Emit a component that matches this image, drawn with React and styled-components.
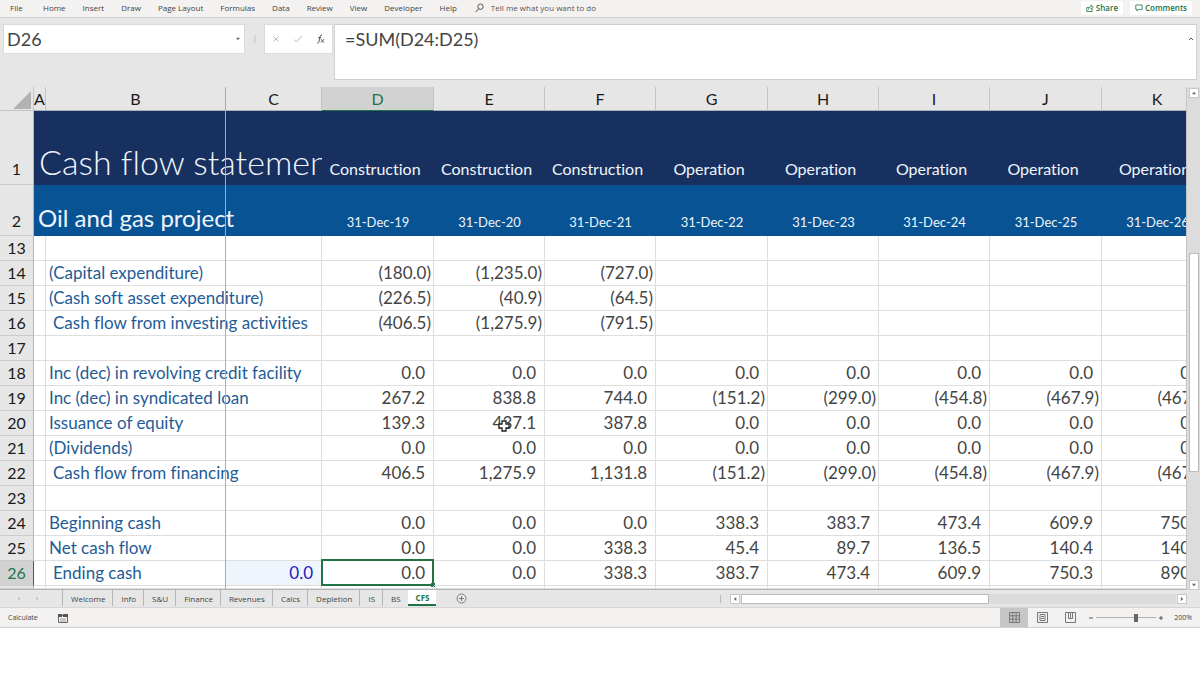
import React from "react";
import styled, { createGlobalStyle } from "styled-components";

const GlobalStyle = createGlobalStyle`
  *, *::before, *::after { box-sizing: border-box; }
  body { margin: 0; background: #fff; font-family: Lato, Roboto, sans-serif; font-variant-ligatures: none; color: #444; }
  button, input, textarea { font: inherit; font-variant-ligatures: none; color: inherit; border: 0; margin: 0; padding: 0; background: none; border-radius: 0; outline: none; }
`;

const UI_FONT = `"Open Sans", "Noto Sans", sans-serif`;

const Window = styled.div`
  display: flex;
  flex-direction: column;
  background: #e6e6e6;
`;

const Ribbon = styled.nav`
  display: flex;
  align-items: center;
  height: 18px;
  padding: 0 8px 2px 10px;
  background: #f3f2f1;
  border-bottom: 1px solid #d2d2d2;
  font-family: ${UI_FONT};
  font-size: 8px;
  line-height: 14px;
`;

const MenuList = styled.div`
  display: flex;
  gap: 17px;
`;

const MenuButton = styled.button`
  min-width: 16px;
  text-align: left;
  white-space: nowrap;
`;

const TellMe = styled.label`
  display: flex;
  flex: 1;
  align-items: center;
  gap: 7px;
  margin-left: 18px;
  input { flex: 1; height: 14px; }
  input::placeholder { color: #555; opacity: 1; }
`;

const RibbonAction = styled.button`
  display: flex;
  align-items: center;
  justify-content: center;
  gap: 2px;
  height: 14px;
  margin-left: 7px;
  padding: 0 5px !important;
  background: #fff !important;
  color: #217346 !important;
  font-weight: 600 !important;
  line-height: 14px;
`;

const FormulaBar = styled.div`
  display: flex;
  align-items: flex-start;
  padding: 6px 3px 7px;
  color: #444;
`;

const NameBox = styled.div`
  display: flex;
  align-items: center;
  width: 242px;
  height: 30px;
  padding: 0 3px;
  background: #fff;
  border: 1px solid #dadada;
  input { flex: 1; min-width: 0; font-size: 18px; line-height: 28px; }
  button { display: flex; }
`;

const Grip = styled.div`
  width: 19px;
  height: 30px;
  display: flex;
  align-items: center;
  justify-content: center;
`;

const EntryButtons = styled.div`
  display: flex;
  align-items: center;
  justify-content: space-between;
  width: 69px;
  height: 30px;
  padding: 0 7px;
  background: #fff;
  border: 1px solid #dadada;
  button { display: flex; }
`;

const FormulaField = styled.div`
  display: flex;
  flex: 1;
  height: 56px;
  margin-left: 1px;
  background: #fff;
  border: 1px solid #d0d0d0;
  textarea {
    flex: 1;
    height: 54px;
    padding: 0 10px;
    resize: none;
    font-size: 18px;
    line-height: 28px;
  }
  button { display: flex; height: 8px; margin: 10px 2px; }
`;

const Workspace = styled.div`
  display: flex;
`;

const Viewport = styled.div`
  position: relative;
  flex: 1;
  min-width: 0;
  overflow: hidden;
  border-bottom: 1px solid #b4b4b4;
`;

const Sheet = styled.table`
  table-layout: fixed;
  width: 1213px;
  border-collapse: separate;
  border-spacing: 0;
  font-size: 16px;
  line-height: 24px;
  background: #fff;
  td, th { padding: 0; font-weight: 400; white-space: nowrap; }
`;

const ColumnHead = styled.th`
  height: 24px;
  color: ${(p) => (p.$active ? "#217346" : "#1a1a1a")};
  background: ${(p) => (p.$active ? "#d2d2d2" : "#e6e6e6")};
  border-right: 1px solid #c4c4c4;
  border-bottom: 1px solid ${(p) => (p.$active ? "#217346" : "#a8b0bc")};
  line-height: 23px;
`;

const Corner = styled.td`
  height: 24px;
  background: #e6e6e6;
  border-right: 1px solid #c4c4c4;
  border-bottom: 1px solid #c4c4c4;
  svg { display: block; margin: 2px 0 0 13px; }
`;

const RowHead = styled.th`
  height: ${(p) => p.$height || 25}px;
  color: ${(p) => (p.$active ? "#217346" : "#1a1a1a")};
  background: ${(p) => (p.$active ? "#d2d2d2" : "#e6e6e6")};
  border-right: 1px solid ${(p) => (p.$active ? "#217346" : "#b4b4b4")};
  border-bottom: 1px solid #cccccc;
`;

const BandRow = styled.tr`
  background: ${(p) => p.$color};
  color: #f0f5fb;
  th, td { vertical-align: baseline; }
`;

const BandTitle = styled.td`
  overflow: hidden;
  padding: ${(p) => p.$pad} !important;
  font-size: ${(p) => p.$size}px;
  line-height: ${(p) => p.$line}px;
  font-weight: ${(p) => p.$weight} !important;
`;

const Phase = styled.td`
  padding-right: 6px !important;
  text-align: center;
`;

const DateCell = styled.td`
  text-align: center;
  font-size: 13px;
`;

const Cell = styled.td`
  position: relative;
  height: ${(p) => p.$height || 25}px;
  border-right: 1px solid #dedede;
  border-bottom: 1px solid #dedede;
`;

const LabelCell = styled(Cell)`
  padding-left: ${(p) => (p.$indent ? 7 : 3)}px !important;
  color: #1f5c96;
  font-size: 17px;
`;

const NumberCell = styled(Cell)`
  padding-right: ${(p) => (p.$negative ? 2 : 8)}px !important;
  text-align: right;
  color: #444;
  font-size: 17px;
`;

const InputCell = styled(NumberCell)`
  background: #eff5fd;
  color: #1b1bc0;
`;

const Selection = styled.span`
  position: absolute;
  inset: -2px -1px -1px -1px;
  border: 2px solid #217346;
  &::after {
    content: "";
    position: absolute;
    right: -3px;
    bottom: -3px;
    width: 4px;
    height: 4px;
    background: #217346;
  }
`;

const FreezeLine = styled.div`
  position: absolute;
  top: 0;
  bottom: 0;
  left: 225px;
  width: 1px;
  background: #a4acb6;
`;

const Pointer = styled.svg`
  position: absolute;
  top: 8px;
  left: 63px;
`;

const VScroll = styled.div`
  display: flex;
  flex-direction: column;
  width: 14px;
  padding: 1px 2px 0;
  background: #dcdcdc;
  border-left: 1px solid #c4c4c4;
`;

const ScrollButton = styled.button`
  display: flex;
  align-items: center;
  justify-content: center;
  width: 10px;
  height: 10px;
  background: #fff !important;
  border: 1px solid #c8c8c8 !important;
`;

const VThumb = styled.div`
  height: 219px;
  margin: 155px 0 auto;
  width: 10px;
  background: #fff;
  border: 1px solid #bcbcbc;
`;

const SheetBar = styled.div`
  display: flex;
  align-items: stretch;
  height: 18px;
  padding-right: 13px;
  border-bottom: 1px solid #d6d6d6;
  font-family: ${UI_FONT};
  font-size: 8px;
  line-height: 15px;
`;

const TabArrows = styled.div`
  display: flex;
  align-items: center;
  gap: 14px;
  width: 62px;
  padding-left: 16px;
  button { display: flex; }
`;

const Tabs = styled.div`
  display: flex;
  align-items: flex-start;
`;

const Tab = styled.button`
  height: 16px;
  padding: 0 7px 0 8px !important;
  white-space: nowrap;
  ${(p) =>
    p.$active
      ? `background: #fff !important; color: #217346 !important; font-weight: 700 !important; border-bottom: 2px solid #217346 !important;`
      : `border-left: 1px solid #b4b4b4 !important;`}
`;

const AddSheet = styled.button`
  display: flex;
  align-items: center;
  margin-left: 20px !important;
`;

const HScroll = styled.div`
  display: flex;
  align-items: center;
  width: 40%;
  margin-left: auto;
  padding-left: 8px;
  gap: 1px;
`;

const HGrip = styled.span`
  width: 1px;
  height: 8px;
  margin-right: 8px;
  background: #b8b8b8;
`;

const HTrack = styled.div`
  flex: 1;
  height: 10px;
  background: #dcdcdc;
`;

const HThumb = styled.div`
  width: 57%;
  height: 10px;
  background: #fff;
  border: 1px solid #bcbcbc;
`;

const StatusBar = styled.footer`
  display: flex;
  align-items: center;
  height: 20px;
  padding: 0 8px;
  background: #f3f2f1;
  border-bottom: 1px solid #cfcfcf;
  font-family: ${UI_FONT};
  font-size: 7px;
`;

const MacroButton = styled.button`
  display: flex;
  margin-left: 20px !important;
`;

const ViewButtons = styled.div`
  display: flex;
  height: 19px;
  margin-left: auto;
`;

const ViewButton = styled.button`
  display: flex;
  align-items: center;
  justify-content: center;
  width: 28px;
  height: 19px;
  ${(p) => p.$active && `background: #c6c6c6 !important;`}
`;

const ZoomControl = styled.div`
  display: flex;
  align-items: center;
  margin-left: 4px;
  gap: 2px;
  button { display: flex; }
`;

const ZoomSlider = styled.input`
  appearance: none;
  width: 60px;
  height: 10px;
  background: linear-gradient(#b0b0b0, #b0b0b0) center / 100% 1px no-repeat !important;
  &::-webkit-slider-thumb {
    appearance: none;
    width: 4px;
    height: 8px;
    background: #666;
  }
`;

const ZoomLevel = styled.button`
  margin-left: 8px !important;
`;

const menus = ["File", "Home", "Insert", "Draw", "Page Layout", "Formulas", "Data", "Review", "View", "Developer", "Help"];

const columns = [
  ["A", 12], ["B", 180], ["C", 96], ["D", 112], ["E", 111], ["F", 111],
  ["G", 112], ["H", 111], ["I", 111], ["J", 112], ["K", 111],
];

const phases = ["Construction", "Construction", "Construction", "Operation", "Operation", "Operation", "Operation", "Operation"];
const dates = [19, 20, 21, 22, 23, 24, 25, 26].map((y) => `31-Dec-${y}`);
const zeros = Array(8).fill("0.0");

const rows = [
  { n: 13 },
  { n: 14, label: "(Capital expenditure)", values: ["(180.0)", "(1,235.0)", "(727.0)"] },
  { n: 15, label: "(Cash soft asset expenditure)", values: ["(226.5)", "(40.9)", "(64.5)"] },
  { n: 16, label: "Cash flow from investing activities", indent: true, values: ["(406.5)", "(1,275.9)", "(791.5)"] },
  { n: 17 },
  { n: 18, label: "Inc (dec) in revolving credit facility", values: zeros },
  { n: 19, label: "Inc (dec) in syndicated loan", values: ["267.2", "838.8", "744.0", "(151.2)", "(299.0)", "(454.8)", "(467.9)", "(467.9)"] },
  { n: 20, label: "Issuance of equity", values: ["139.3", "437.1", "387.8", "0.0", "0.0", "0.0", "0.0", "0.0"] },
  { n: 21, label: "(Dividends)", values: zeros },
  { n: 22, label: "Cash flow from financing", indent: true, values: ["406.5", "1,275.9", "1,131.8", "(151.2)", "(299.0)", "(454.8)", "(467.9)", "(467.9)"] },
  { n: 23 },
  { n: 24, label: "Beginning cash", values: ["0.0", "0.0", "0.0", "338.3", "383.7", "473.4", "609.9", "750.3"] },
  { n: 25, label: "Net cash flow", values: ["0.0", "0.0", "338.3", "45.4", "89.7", "136.5", "140.4", "140.4"] },
  { n: 26, label: "Ending cash", indent: true, input: "0.0", values: ["0.0", "0.0", "338.3", "383.7", "473.4", "609.9", "750.3", "890.7"] },
];

const sheets = ["Welcome", "Info", "S&U", "Finance", "Revenues", "Calcs", "Depletion", "IS", "BS", "CFS"];

const Arrow = ({ d, color = "#666", size = 6 }) => (
  <svg width={size} height={size} viewBox="0 0 6 6" aria-hidden="true">
    <path d={d} fill={color} />
  </svg>
);
const UP = "M1 4.3 3 1.8 5 4.3Z";
const DOWN = "M1 1.8 3 4.3 5 1.8Z";
const LEFT = "M4.3 1 1.8 3 4.3 5Z";
const RIGHT = "M1.8 1 4.3 3 1.8 5Z";

const Line = ({ w = 8, h = 8, d, color = "#555", width = 1 }) => (
  <svg width={w} height={h} viewBox={`0 0 ${w} ${h}`} fill="none" stroke={color} strokeWidth={width} aria-hidden="true">
    <path d={d} />
  </svg>
);

function DataRow({ row }) {
  const active = row.n === 26;
  return (
    <tr>
      <RowHead scope="row" $active={active}>{row.n}</RowHead>
      <Cell />
      <LabelCell $indent={row.indent}>{row.label}</LabelCell>
      {row.input ? <InputCell>{row.input}</InputCell> : <Cell />}
      {dates.map((date, i) => {
        const value = row.values?.[i] ?? "";
        return (
          <NumberCell key={date} $negative={value.startsWith("(")}>
            {value}
            {active && i === 0 && <Selection />}
            {row.n === 20 && i === 1 && (
              <Pointer width="14" height="14" viewBox="0 0 14 14" aria-hidden="true">
                <path d="M5 2h4v3h3v4H9v3H5V9H2V5h3Z" fill="#fff" stroke="#222" strokeWidth="1.3" />
              </Pointer>
            )}
          </NumberCell>
        );
      })}
    </tr>
  );
}

export default function App() {
  return (
    <Window>
      <GlobalStyle />
      <Ribbon>
        <MenuList>
          {menus.map((m) => <MenuButton key={m}>{m}</MenuButton>)}
        </MenuList>
        <TellMe>
          <Line w={9} h={10} d="M5.5 1a2.7 2.7 0 1 1 0 5.4a2.7 2.7 0 1 1 0-5.4M3.6 5.7 .8 9" />
          <input placeholder="Tell me what you want to do" aria-label="Tell me what you want to do" />
        </TellMe>
        <RibbonAction>
          <Line color="#217346" d="M3 3.5H.8v4h5.4V5M2.5 5.5C2.5 3.5 4 2.7 5 2.7V1L7.4 3.2 5 5.2V3.8" width={0.8} />
          Share
        </RibbonAction>
        <RibbonAction>
          <Line color="#217346" d="M.8 1h6.4v4.4H3.6L2 7V5.4H.8Z" width={0.8} />
          Comments
        </RibbonAction>
      </Ribbon>

      <FormulaBar>
        <NameBox>
          <input defaultValue="D26" aria-label="Name box" />
          <button aria-label="Name list"><Arrow d={DOWN} /></button>
        </NameBox>
        <Grip><Line w={2} h={8} d="M1 0v8" color="#c2c2c2" /></Grip>
        <EntryButtons>
          <button aria-label="Cancel"><Line d="m1.5 1.5 5 5m0-5-5 5" color="#bbb" /></button>
          <button aria-label="Enter"><Line w={10} d="m1 4.5 2.5 2.5L9 1" color="#bbb" /></button>
          <button aria-label="Insert function">
            <Line w={9} h={10} d="M6 1.2C4.6.6 4.2 1.6 4 3L3 7.5C2.7 9 2 9.4 1 9M2.2 3.7h3M5 5.2l3 3.4M8 5.2 5 8.6" color="#555" />
          </button>
        </EntryButtons>
        <FormulaField>
          <textarea defaultValue="=SUM(D24:D25)" aria-label="Formula" spellCheck={false} />
          <button aria-label="Collapse formula bar"><Line w={6} h={8} d="m1 5 2-2 2 2" /></button>
        </FormulaField>
      </FormulaBar>

      <Workspace>
        <Viewport>
          <Sheet>
            <colgroup>
              <col width="34" />
              {columns.map(([name, width]) => <col key={name} width={width} />)}
            </colgroup>
            <thead>
              <tr>
                <Corner>
                  <svg width="18" height="18" viewBox="0 0 18 18" aria-hidden="true"><path d="M18 0v18H0Z" fill="#b2b2b2" /></svg>
                </Corner>
                {columns.map(([name]) => <ColumnHead key={name} scope="col" $active={name === "D"}>{name}</ColumnHead>)}
              </tr>
            </thead>
            <tbody>
              <BandRow $color="#17305f">
                <RowHead scope="row" $height={74}>1</RowHead>
                <BandTitle colSpan={3} $pad="31px 0 0 5px" $size={34} $line={40} $weight={300}>Cash flow statement</BandTitle>
                {phases.map((phase, i) => <Phase key={i}>{phase}</Phase>)}
              </BandRow>
              <BandRow $color="#075394">
                <RowHead scope="row" $height={51}>2</RowHead>
                <BandTitle colSpan={3} $pad="18px 0 0 4px" $size={24} $line={30} $weight={400}>Oil and gas project</BandTitle>
                {dates.map((date) => <DateCell key={date}>{date}</DateCell>)}
              </BandRow>
              {rows.map((row) => <DataRow key={row.n} row={row} />)}
              <tr>
                <RowHead $height={3} />
                {columns.map(([name]) => <Cell key={name} $height={3} />)}
              </tr>
            </tbody>
          </Sheet>
          <FreezeLine />
        </Viewport>
        <VScroll>
          <ScrollButton aria-label="Scroll up"><Arrow d={UP} /></ScrollButton>
          <VThumb />
          <ScrollButton aria-label="Scroll down"><Arrow d={DOWN} /></ScrollButton>
        </VScroll>
      </Workspace>

      <SheetBar>
        <TabArrows>
          <button aria-label="Previous sheet"><Arrow d={LEFT} color="#b8b8b8" size={5} /></button>
          <button aria-label="Next sheet"><Arrow d={RIGHT} color="#b8b8b8" size={5} /></button>
        </TabArrows>
        <Tabs>
          {sheets.map((s) => <Tab key={s} $active={s === "CFS"}>{s}</Tab>)}
        </Tabs>
        <AddSheet aria-label="New sheet">
          <Line w={11} h={11} d="M5.5 1a4.5 4.5 0 1 1 0 9a4.5 4.5 0 1 1 0-9M3 5.5h5M5.5 3v5" color="#666" width={0.8} />
        </AddSheet>
        <HScroll>
          <HGrip />
          <ScrollButton aria-label="Scroll left"><Arrow d={LEFT} /></ScrollButton>
          <HTrack><HThumb /></HTrack>
          <ScrollButton aria-label="Scroll right"><Arrow d={RIGHT} /></ScrollButton>
        </HScroll>
      </SheetBar>

      <StatusBar>
        <span>Calculate</span>
        <MacroButton aria-label="Record macro">
          <svg width="10" height="10" viewBox="0 0 10 10" aria-hidden="true">
            <path d="M.5 2.5h9v7h-9Z" fill="#f3f2f1" stroke="#666" />
            <path d="M0 1h4v3H0ZM5 1h5v3H5Z" fill="#555" />
            <path d="M2 6h6M2 8h6" stroke="#888" strokeWidth=".8" />
          </svg>
        </MacroButton>
        <ViewButtons>
          <ViewButton $active aria-label="Normal view">
            <Line w={11} h={11} d="M.5 .5h10v10H.5ZM.5 3.8h10M.5 7.1h10M3.8.5v10M7.1.5v10" color="#777" />
          </ViewButton>
          <ViewButton aria-label="Page layout view">
            <Line w={11} h={11} d="M.5 .5h10v10H.5ZM3 2.5h5v6H3ZM4 4.5h3M4 6.5h3" color="#777" />
          </ViewButton>
          <ViewButton aria-label="Page break preview">
            <Line w={11} h={11} d="M.5 .5h10v10H.5ZM3.5.5v6h4v-6M5.5 .5v6" color="#777" />
          </ViewButton>
        </ViewButtons>
        <ZoomControl>
          <button aria-label="Zoom out"><Line w={6} h={6} d="M1 3h4" width={1} /></button>
          <ZoomSlider type="range" min="0" max="100" defaultValue="68" aria-label="Zoom" />
          <button aria-label="Zoom in"><Line w={6} h={6} d="M1 3h4M3 1v4" width={1} /></button>
          <ZoomLevel>200%</ZoomLevel>
        </ZoomControl>
      </StatusBar>
    </Window>
  );
}
